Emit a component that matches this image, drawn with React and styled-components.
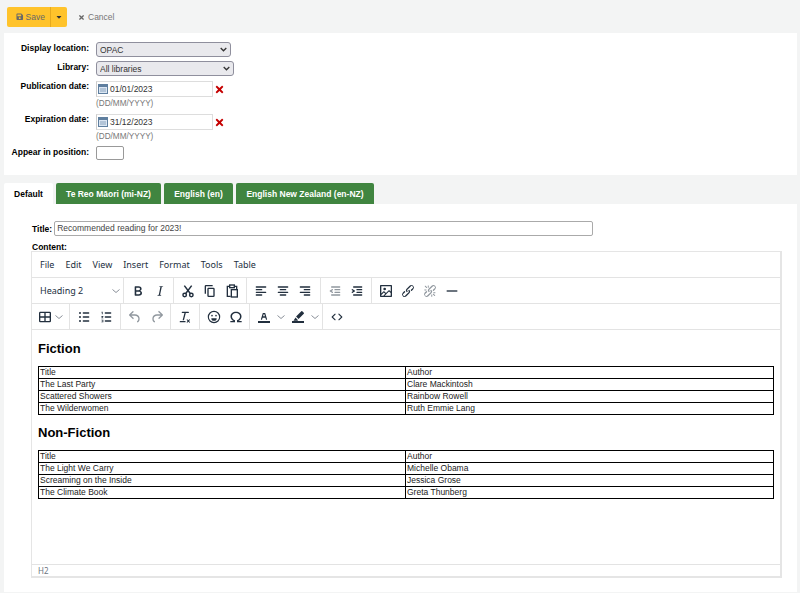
import styled, { createGlobalStyle } from "styled-components";
import { FaSave, FaTimes, FaCaretDown } from "react-icons/fa";

const GlobalStyle = createGlobalStyle`
    html, body {
        margin: 0;
        padding: 0;
        background: #f3f4f4;
        font-family: "Liberation Sans", Arial, sans-serif;
        font-size: 8.5px;
        color: #000;
    }
`;

const Page = styled.div`
    width: 800px;
    height: 593px;
    overflow: hidden;
`;

const Toolbar = styled.div`
    display: flex;
    align-items: center;
    height: 33px;
    padding: 0 0 0 7px;
    box-sizing: border-box;
`;

const SaveGroup = styled.div`
    display: flex;
    height: 20px;
    margin-top: 1px;
    width: 60px;
    background: #ffc32b;
    border-radius: 2px;
    color: #696969;
`;

const SaveButton = styled.div`
    display: flex;
    align-items: center;
    gap: 2px;
    width: 44px;
    padding-left: 9px;
    box-sizing: border-box;
    border-right: 1px solid #e6a91e;
    svg { font-size: 7.5px; }
`;

const SaveCaret = styled.div`
    flex: 1;
    display: flex;
    align-items: center;
    justify-content: center;
    color: #333;
    svg { font-size: 8px; }
`;

const CancelLink = styled.div`
    display: flex;
    align-items: center;
    gap: 3px;
    margin-left: 11px;
    margin-top: 1px;
    color: #777;
    svg { font-size: 7px; color: #666; }
`;

const Panel = styled.div`
    margin: 0 3px 0 4px;
    background: #fff;
`;

const FormPanel = styled(Panel)`
    height: 142px;
    padding-top: 9px;
    box-sizing: border-box;
`;

const FormRow = styled.div`
    display: flex;
    align-items: flex-start;
    margin-bottom: 4px;
`;

const Label = styled.div`
    width: 85px;
    margin-right: 7px;
    text-align: right;
    font-weight: 700;
    line-height: 12px;
    color: #000;
    white-space: nowrap;
`;

const SelectWrap = styled.div`
    position: relative;
    width: ${({ $width }) => $width}px;
    height: 15px;
`;

const SelectArrow = styled.svg`
    position: absolute;
    right: 4px;
    top: 5px;
    pointer-events: none;
`;

const Select = styled.select`
    appearance: none;
    display: block;
    width: 100%;
    height: 100%;
    padding: 0 0 0 3px;
    box-sizing: border-box;
    border: 1px solid #8f8f9d;
    border-radius: 3px;
    background: #e9e9ed;
    font-family: "Liberation Sans", Arial, sans-serif;
    font-size: 8.5px;
    color: #333;
`;

const DateField = styled.div`
    display: grid;
    grid-template-columns: 117px auto;
    column-gap: 1px;
    align-items: center;
`;

const DateInput = styled.div`
    display: flex;
    align-items: center;
    gap: 2px;
    height: 16px;
    margin-top: 1px;
    padding-left: 1px;
    box-sizing: border-box;
    border: 1px solid #ddd;
    border-left-color: #ccc;
    color: #333;
`;

const ClearIcon = styled(FaTimes)`
    font-size: 11px;
    margin-top: 2px;
    color: #c50000;
`;

const Hint = styled.div`
    grid-column: 1 / 3;
    height: 12px;
    line-height: 14px;
    color: #777;
    font-size: 8.2px;
`;

const PositionInput = styled.div`
    width: 28px;
    height: 14px;
    box-sizing: border-box;
    border: 1px solid #999;
    border-radius: 2px;
    background: #fff;
`;

const Tabs = styled.div`
    display: flex;
    gap: 3px;
    height: 21px;
    margin: 8px 0 0 4px;
`;

const Tab = styled.div`
    display: flex;
    align-items: center;
    justify-content: center;
    width: ${({ $width }) => $width}px;
    font-weight: 700;
    background: ${({ $active }) => ($active ? "#fff" : "#408540")};
    color: ${({ $active }) => ($active ? "#000" : "#fff")};
    border-radius: 2px 2px 0 0;
`;

const ContentPanel = styled(Panel)`
    height: 388px;
    padding: 17px 15px 0 27px;
    box-sizing: border-box;
`;

const TitleRow = styled.div`
    display: flex;
    align-items: center;
    gap: 2px;
    height: 15px;
    margin-left: 1px;
    font-weight: 700;
`;

const TitleInput = styled.div`
    width: 539px;
    height: 15px;
    line-height: 13px;
    padding-left: 2px;
    box-sizing: border-box;
    border: 1px solid #aaa;
    border-radius: 2px;
    font-weight: 400;
    color: #444;
`;

const ContentLabel = styled.div`
    margin: 6px 0 0 1px;
    height: 9px;
    line-height: 10px;
    font-weight: 700;
`;

const Editor = styled.div`
    display: flex;
    flex-direction: column;
    height: 327px;
    box-sizing: border-box;
    border: 1px solid #e5e5e5;
    border-bottom-width: 2px;
    border-right-width: 2px;
`;

const MenuBar = styled.div`
    display: flex;
    align-items: center;
    gap: 11px;
    height: 26px;
    padding-left: 8px;
    box-sizing: border-box;
    border-bottom: 1px solid #e3e3e3;
    font-family: "Noto Sans", sans-serif;
    font-size: 9px;
    color: #222f3e;
`;

const ToolRow = styled.div`
    display: flex;
    height: 26px;
    box-sizing: border-box;
    border-bottom: 1px solid #e3e3e3;
`;

const ToolGroup = styled.div`
    display: flex;
    align-items: center;
    padding: ${({ $pad }) => $pad || "0 3px"};
    border-left: ${({ $first }) => ($first ? "0" : "1px solid #e3e3e3")};
`;

const FormatSelect = styled.div`
    display: flex;
    align-items: center;
    justify-content: space-between;
    width: 91px;
    padding: 0 2px 0 8px;
    box-sizing: border-box;
    font-family: "Noto Sans", sans-serif;
    font-size: 9px;
    color: #222f3e;
`;

const ToolButton = styled.div`
    display: flex;
    align-items: center;
    justify-content: center;
    width: ${({ $width }) => $width || 22}px;
    height: 22px;
`;

const SplitPart = styled.div`
    display: flex;
    align-items: center;
    justify-content: center;
    width: ${({ $width }) => $width}px;
`;

const EditArea = styled.div`
    flex: 1;
    padding: 1px 6px 0;
    color: #222;
`;

const Heading = styled.h2`
    margin: 0;
    height: 35px;
    padding-top: 9px;
    box-sizing: border-box;
    font-size: 13px;
    line-height: 17px;
    font-weight: 700;
    color: #000;
`;

const DocTable = styled.table`
    width: 736px;
    border-collapse: collapse;
    table-layout: fixed;
    td {
        height: 11px;
        padding: 0 1px;
        border: 1px solid #000;
        font-size: 8.5px;
        line-height: 11px;
        color: #222;
        white-space: nowrap;
    }
    td:first-child { width: 364px; }
`;

const StatusBar = styled.div`
    height: 12px;
    line-height: 11px;
    padding-left: 6px;
    box-sizing: border-box;
    border-top: 1px solid #e3e3e3;
    font-family: "Noto Sans", sans-serif;
    font-size: 8px;
    color: #6d7580;
`;

// tinymce style icons, 24x24 viewbox
const ICONS = {
    bold: <path d="M7.8 19c-.3 0-.5 0-.6-.2l-.2-.5V5.7c0-.2 0-.4.2-.5l.6-.2h5c1.5 0 2.7.3 3.5 1 .7.6 1.1 1.4 1.1 2.5a3 3 0 0 1-.6 1.9c-.4.6-1 1-1.6 1.2.4.1.9.3 1.3.6s.8.7 1 1.2c.4.4.5 1 .5 1.6 0 1.3-.4 2.3-1.3 3-.8.7-2.1 1-3.8 1H7.8zm5-8.3c.6 0 1.2-.1 1.6-.5.4-.3.6-.7.6-1.3 0-1.1-.8-1.7-2.4-1.7H9.3v3.5h3.4zm.5 6c.7 0 1.3-.1 1.7-.4.4-.4.6-.9.6-1.5s-.2-1-.7-1.4c-.4-.3-1-.4-2-.4H9.4v3.8h4z" />,
    italic: <path d="M16.7 4.7l-.1.9h-.3c-.6 0-1 0-1.4.3-.3.3-.4.6-.5 1.1l-2.1 9.8v.6c0 .5.4.8 1.4.8h.2l-.2.8H8l.2-.8h.2c1.1 0 1.8-.5 2-1.5l2-9.8.1-.5c0-.6-.4-.8-1.4-.8h-.3l.2-.9h5.8z" />,
    cut: (
        <g fill="none" stroke="currentColor" strokeWidth="2.2">
            <circle cx="7" cy="18" r="2.6" />
            <circle cx="17" cy="18" r="2.6" />
            <path d="M8.6 15.8L17.5 4M15.4 15.8L6.5 4" />
        </g>
    ),
    copy: <path d="M16 3H6a2 2 0 0 0-2 2v11h2V5h10V3zm1 4a2 2 0 0 1 2 2v10a2 2 0 0 1-2 2h-7a2 2 0 0 1-2-2V9c0-1.2.9-2 2-2h7zm0 12V9h-7v10h7z" />,
    paste: (
        <g fill="none" stroke="currentColor" strokeWidth="2">
            <path d="M8 5H5v15h5" />
            <path d="M16 5h3v4" />
            <rect x="8.5" y="3" width="7" height="4" />
            <rect x="11" y="10" width="9" height="11" />
        </g>
    ),
    alignLeft: <path d="M5 5h14c.6 0 1 .4 1 1s-.4 1-1 1H5a1 1 0 1 1 0-2zm0 4h8c.6 0 1 .4 1 1s-.4 1-1 1H5a1 1 0 1 1 0-2zm0 8h8c.6 0 1 .4 1 1s-.4 1-1 1H5a1 1 0 0 1 0-2zm0-4h14c.6 0 1 .4 1 1s-.4 1-1 1H5a1 1 0 0 1 0-2z" />,
    alignCenter: <path d="M5 5h14c.6 0 1 .4 1 1s-.4 1-1 1H5a1 1 0 1 1 0-2zm3 4h8c.6 0 1 .4 1 1s-.4 1-1 1H8a1 1 0 1 1 0-2zm0 8h8c.6 0 1 .4 1 1s-.4 1-1 1H8a1 1 0 0 1 0-2zm-3-4h14c.6 0 1 .4 1 1s-.4 1-1 1H5a1 1 0 0 1 0-2z" />,
    alignRight: <path d="M5 5h14c.6 0 1 .4 1 1s-.4 1-1 1H5a1 1 0 1 1 0-2zm6 4h8c.6 0 1 .4 1 1s-.4 1-1 1h-8a1 1 0 0 1 0-2zm0 8h8c.6 0 1 .4 1 1s-.4 1-1 1h-8a1 1 0 0 1 0-2zm-6-4h14c.6 0 1 .4 1 1s-.4 1-1 1H5a1 1 0 0 1 0-2z" />,
    outdent: <path d="M7 5h12c.6 0 1 .4 1 1s-.4 1-1 1H7a1 1 0 1 1 0-2zm5 4h7c.6 0 1 .4 1 1s-.4 1-1 1h-7a1 1 0 0 1 0-2zm0 4h7c.6 0 1 .4 1 1s-.4 1-1 1h-7a1 1 0 0 1 0-2zm-5 4h12a1 1 0 0 1 0 2H7a1 1 0 0 1 0-2zm1.6-3.8a1 1 0 0 1-1.2 1.6l-3-2a1 1 0 0 1 0-1.6l3-2a1 1 0 0 1 1.2 1.6L6.8 12l1.8 1.2z" />,
    indent: <path d="M7 5h12c.6 0 1 .4 1 1s-.4 1-1 1H7a1 1 0 1 1 0-2zm5 4h7c.6 0 1 .4 1 1s-.4 1-1 1h-7a1 1 0 0 1 0-2zm0 4h7c.6 0 1 .4 1 1s-.4 1-1 1h-7a1 1 0 0 1 0-2zm-5 4h12a1 1 0 0 1 0 2H7a1 1 0 0 1 0-2zm-2.6-3.8L6.2 12l-1.8-1.2a1 1 0 0 1 1.2-1.6l3 2a1 1 0 0 1 0 1.6l-3 2a1 1 0 1 1-1.2-1.6z" />,
    image: <path d="M5 15.7l3.3-3.2c.3-.3.7-.3 1 0L12 15l4.1-4c.3-.4.8-.4 1 0l2 1.9V5H5v10.7zM5 18V19h3l2.8-2.9-2-2L5 17.9zm14-3l-2.5-2.4-6.4 6.5H19v-4zM4 3h16c.6 0 1 .4 1 1v16c0 .6-.4 1-1 1H4a1 1 0 0 1-1-1V4c0-.6.4-1 1-1zm6 8a2 2 0 1 0 0-4 2 2 0 0 0 0 4z" />,
    link: <path d="M6.2 12.3a1 1 0 0 1 1.4 1.4l-2 2a2 2 0 1 0 2.6 2.8l4.8-4.8a1 1 0 0 0 0-1.4 1 1 0 1 1 1.4-1.3 2.9 2.9 0 0 1 0 4L9.6 20a3.9 3.9 0 0 1-5.5-5.5l2-2zm11.6-.6a1 1 0 0 1-1.4-1.4l2-2a2 2 0 1 0-2.6-2.8L11 10.3a1 1 0 0 0 0 1.4A1 1 0 1 1 9.6 13a2.9 2.9 0 0 1 0-4L14.4 4a3.9 3.9 0 0 1 5.5 5.5l-2 2z" />,
    unlink: <path d="M6.2 12.3a1 1 0 0 1 1.4 1.4l-2.1 2a2 2 0 1 0 2.7 2.8l4.8-4.8a1 1 0 0 0 0-1.4 1 1 0 1 1 1.4-1.3 2.9 2.9 0 0 1 0 4l-4.8 4.7a3.9 3.9 0 0 1-5.5-5.5l2-2zm11.6-.6a1 1 0 0 1-1.4-1.4l2.1-2a2 2 0 1 0-2.7-2.8L11 10.3a1 1 0 0 0 0 1.4A1 1 0 1 1 9.6 13a2.9 2.9 0 0 1 0-4L14.4 4a3.9 3.9 0 0 1 5.5 5.5l-2 2zM7.6 6.3a.8.8 0 0 1-1 1.1L4.3 5.1a.8.8 0 0 1 1-1.1l2.3 2.3zm12.1 12.2a.8.8 0 0 1-1 1.1l-2.3-2.3a.8.8 0 0 1 1-1.1l2.3 2.3zM9.6 3.8c.3 0 .5.2.5.5l.1 2.4a.8.8 0 0 1-1.5 0V4.3c0-.3.3-.5.5-.5h.4zm5.3 13.4c.3 0 .5.3.5.5v2.4a.8.8 0 0 1-1.5 0v-2.4c0-.2.3-.5.5-.5h.5zM3.5 10.1c0-.2.2-.4.5-.4h2.3a.8.8 0 0 1 0 1.5H4c-.3 0-.5-.3-.5-.6zm13.4 4.4c0-.3.2-.5.5-.5h2.3a.8.8 0 0 1 0 1.5h-2.3c-.3 0-.5-.3-.5-.6z" />,
    hr: <path d="M4 11h16v2H4z" />,
    table: <path d="M19 4a2 2 0 0 1 2 2v12a2 2 0 0 1-2 2H5a2 2 0 0 1-2-2V6c0-1.1.9-2 2-2h14zm0 9h-6v5h6v-5zm-8 0H5v5h6v-5zm8-7h-6v5h6V6zm-8 0H5v5h6V6z" />,
    bullist: (
        <g>
            <path d="M11 5h8a1 1 0 0 1 0 2h-8a1 1 0 0 1 0-2zm0 6h8a1 1 0 0 1 0 2h-8a1 1 0 0 1 0-2zm0 6h8a1 1 0 0 1 0 2h-8a1 1 0 0 1 0-2z" />
            <circle cx="6" cy="6" r="1.5" />
            <circle cx="6" cy="12" r="1.5" />
            <circle cx="6" cy="18" r="1.5" />
        </g>
    ),
    numlist: (
        <g>
            <path d="M11 5h8a1 1 0 0 1 0 2h-8a1 1 0 0 1 0-2zm0 6h8a1 1 0 0 1 0 2h-8a1 1 0 0 1 0-2zm0 6h8a1 1 0 0 1 0 2h-8a1 1 0 0 1 0-2z" />
            <path d="M5.5 4H7v4H5.8V5.2H5zM5 10.5h3v1L6.4 13H8v1H5v-1l1.6-1.5H5zM5 16h3v4H5v-1h2v-.6H5.8v-.8H7V17H5z" />
        </g>
    ),
    undo: <path d="M6.4 8H12c3.7 0 6.2 2 6.8 5.1.6 2.7-.4 5.6-2.3 6.8a1 1 0 0 1-1-1.8c1.1-.6 1.8-2.7 1.4-4.6-.5-2.1-2.1-3.5-4.9-3.5H6.4l3.3 3.3a1 1 0 1 1-1.4 1.4l-5-5a1 1 0 0 1 0-1.4l5-5a1 1 0 0 1 1.4 1.4L6.4 8z" />,
    redo: <path d="M17.6 10H12c-2.8 0-4.4 1.4-4.9 3.5-.4 2 .3 4 1.4 4.6a1 1 0 1 1-1 1.8c-2-1.2-2.9-4.1-2.3-6.8.6-3 3-5.1 6.8-5.1h5.6l-3.3-3.3a1 1 0 1 1 1.4-1.4l5 5a1 1 0 0 1 0 1.4l-5 5a1 1 0 0 1-1.4-1.4l3.3-3.3z" />,
    clear: <path d="M13.2 6l-2.6 10.2a1 1 0 0 1-1 .8h-.2a.8.8 0 0 1-.8-1l2.6-10H8a1 1 0 1 1 0-2h9a1 1 0 0 1 0 2h-3.8zM5 18h7a1 1 0 0 1 0 2H5a1 1 0 0 1 0-2zm10.3-2.7l1.7 1.7 1.7-1.7 1 1-1.7 1.7 1.7 1.7-1 1-1.7-1.7-1.7 1.7-1-1 1.7-1.7-1.7-1.7z" />,
    emoji: (
        <g>
            <circle cx="12" cy="12" r="8.5" fill="none" stroke="currentColor" strokeWidth="1.7" />
            <circle cx="9" cy="10" r="1.2" />
            <circle cx="15" cy="10" r="1.2" />
            <path d="M8 13.8h8a4 4 0 0 1-8 0z" />
        </g>
    ),
    omega: <path d="M3.5 20v-2h4.9A7.5 7.5 0 0 1 3.7 11C3.7 7 7.4 4 12 4s8.3 3 8.3 7a7.5 7.5 0 0 1-4.7 7h4.9v2h-7v-3.3c2.6-.8 4.5-3 4.5-5.6 0-3-2.6-5.1-6-5.1s-6 2.1-6 5.1c0 2.6 1.9 4.8 4.5 5.6V20z" />,
    textColor: (
        <g>
            <path d="M3 18h18v3H3z" />
            <path d="M8.7 16h-.8a.5.5 0 0 1-.5-.6l2.7-9c.1-.3.3-.4.5-.4h2.8c.2 0 .4.1.5.4l2.7 9a.5.5 0 0 1-.5.6h-.8a.5.5 0 0 1-.4-.4l-.7-2.2c0-.3-.3-.4-.5-.4h-3.4c-.2 0-.4.1-.5.4l-.7 2.2c0 .3-.2.4-.4.4zm2.6-7.6l-.6 2a.5.5 0 0 0 .5.6h1.6a.5.5 0 0 0 .5-.6l-.6-2c0-.3-.3-.4-.5-.4h-.4c-.2 0-.4.1-.5.4z" />
        </g>
    ),
    highlight: (
        <g>
            <path d="M3 18h18v3H3z" />
            <path d="M17 3.3a1 1 0 0 1 1.4 0l2.3 2.3a1 1 0 0 1 0 1.4l-7.9 8-3.7-3.7zM8.3 12.9l3.8 3.8-1.1 1H5.2z" />
        </g>
    ),
    code: <path d="M9.8 15.7c.3.3.3.8 0 1-.3.4-.9.4-1.2 0l-4.4-4.1a.8.8 0 0 1 0-1.2l4.4-4.2c.3-.3.9-.3 1.2 0 .3.3.3.8 0 1.1L6 12l3.8 3.7zM14.2 15.7c-.3.3-.3.8 0 1 .4.4.9.4 1.2 0l4.4-4.1c.3-.3.3-.9 0-1.2l-4.4-4.2a.8.8 0 0 0-1.2 0c-.3.3-.3.8 0 1.1L18 12l-3.8 3.7z" />,
};

const Icon = ({ name, off }) => (
    <svg
        width="16"
        height="16"
        viewBox="0 0 24 24"
        fill="currentColor"
        color={off ? "rgba(34,47,62,.5)" : "#222f3e"}
    >
        {ICONS[name]}
    </svg>
);

const Chevron = () => (
    <svg width="10" height="10" viewBox="0 0 10 10" fill="none" stroke="#8a9099" strokeWidth="1">
        <path d="M1.5 3.5L5 6.5l3.5-3" />
    </svg>
);

const CalendarIcon = () => (
    <svg width="10" height="10" viewBox="0 0 10 10">
        <rect x="0.5" y="0.5" width="9" height="9" fill="#dbe6f3" stroke="#5f7f9f" />
        <rect x="1" y="1" width="8" height="2" fill="#5f7f9f" />
        <path d="M2 5h6M2 7h6" stroke="#8aa3bc" />
    </svg>
);

const Tool = ({ name, off }) => (
    <ToolButton>
        <Icon name={name} off={off} />
    </ToolButton>
);

const Split = ({ name, iconWidth, arrowWidth }) => (
    <ToolButton $width={iconWidth + arrowWidth}>
        <SplitPart $width={iconWidth}>
            <Icon name={name} />
        </SplitPart>
        <SplitPart $width={arrowWidth}>
            <Chevron />
        </SplitPart>
    </ToolButton>
);

const FormSelect = ({ width, value }) => (
    <SelectWrap $width={width}>
        <Select defaultValue={value}>
            <option>{value}</option>
        </Select>
        <SelectArrow width="7" height="5" viewBox="0 0 7 5" fill="none" stroke="#333" strokeWidth="1.3">
            <path d="M.7 1L3.5 3.8 6.3 1" />
        </SelectArrow>
    </SelectWrap>
);

const DateRow = ({ label, value }) => (
    <FormRow>
        <Label>{label}</Label>
        <DateField>
            <DateInput>
                <CalendarIcon />
                {value}
            </DateInput>
            <ClearIcon />
            <Hint>(DD/MM/YYYY)</Hint>
        </DateField>
    </FormRow>
);

const Doc = ({ rows }) => (
    <DocTable>
        <tbody>
            {rows.map((row) => (
                <tr key={row[0]}>
                    <td>{row[0]}</td>
                    <td>{row[1]}</td>
                </tr>
            ))}
        </tbody>
    </DocTable>
);

const fiction = [
    ["Title", "Author"],
    ["The Last Party", "Clare Mackintosh"],
    ["Scattered Showers", "Rainbow Rowell"],
    ["The Wilderwomen", "Ruth Emmie Lang"],
];

const nonFiction = [
    ["Title", "Author"],
    ["The Light We Carry", "Michelle Obama"],
    ["Screaming on the Inside", "Jessica Grose"],
    ["The Climate Book", "Greta Thunberg"],
];

const App = () => {
    return (
        <Page>
            <GlobalStyle />
            <Toolbar>
                <SaveGroup>
                    <SaveButton>
                        <FaSave />
                        Save
                    </SaveButton>
                    <SaveCaret>
                        <FaCaretDown />
                    </SaveCaret>
                </SaveGroup>
                <CancelLink>
                    <FaTimes />
                    Cancel
                </CancelLink>
            </Toolbar>

            <FormPanel>
                <FormRow>
                    <Label>Display location:</Label>
                    <FormSelect width={135} value="OPAC" />
                </FormRow>
                <FormRow>
                    <Label>Library:</Label>
                    <FormSelect width={138} value="All libraries" />
                </FormRow>
                <DateRow label="Publication date:" value="01/01/2023" />
                <DateRow label="Expiration date:" value="31/12/2023" />
                <FormRow>
                    <Label>Appear in position:</Label>
                    <PositionInput />
                </FormRow>
            </FormPanel>

            <Tabs>
                <Tab $active $width={49}>Default</Tab>
                <Tab $width={105}>Te Reo Māori (mi-NZ)</Tab>
                <Tab $width={69}>English (en)</Tab>
                <Tab $width={138}>English New Zealand (en-NZ)</Tab>
            </Tabs>

            <ContentPanel>
                <TitleRow>
                    Title:
                    <TitleInput>Recommended reading for 2023!</TitleInput>
                </TitleRow>
                <ContentLabel>Content:</ContentLabel>
                <Editor>
                    <MenuBar>
                        <span>File</span>
                        <span>Edit</span>
                        <span>View</span>
                        <span>Insert</span>
                        <span>Format</span>
                        <span>Tools</span>
                        <span>Table</span>
                    </MenuBar>
                    <ToolRow>
                        <FormatSelect>
                            Heading 2
                            <Chevron />
                        </FormatSelect>
                        <ToolGroup $pad="0 2px 0 3px">
                            <Tool name="bold" />
                            <Tool name="italic" />
                        </ToolGroup>
                        <ToolGroup>
                            <Tool name="cut" />
                            <Tool name="copy" />
                            <Tool name="paste" />
                        </ToolGroup>
                        <ToolGroup $pad="0 3.5px 0 3px">
                            <Tool name="alignLeft" />
                            <Tool name="alignCenter" />
                            <Tool name="alignRight" />
                        </ToolGroup>
                        <ToolGroup>
                            <Tool name="outdent" off />
                            <Tool name="indent" />
                        </ToolGroup>
                        <ToolGroup>
                            <Tool name="image" />
                            <Tool name="link" />
                            <Tool name="unlink" off />
                            <Tool name="hr" />
                        </ToolGroup>
                    </ToolRow>
                    <ToolRow>
                        <ToolGroup $first $pad="0 5px 0 4px">
                            <Split name="table" iconWidth={18} arrowWidth={10} />
                        </ToolGroup>
                        <ToolGroup>
                            <Tool name="bullist" />
                            <Tool name="numlist" />
                        </ToolGroup>
                        <ToolGroup $pad="0 2px 0 3px">
                            <Tool name="undo" off />
                            <Tool name="redo" off />
                        </ToolGroup>
                        <ToolGroup>
                            <Tool name="clear" />
                        </ToolGroup>
                        <ToolGroup $pad="0 2px 0 3px">
                            <Tool name="emoji" />
                            <Tool name="omega" />
                        </ToolGroup>
                        <ToolGroup $pad="0 0 0 3.5px">
                            <Split name="textColor" iconWidth={20} arrowWidth={14} />
                            <Split name="highlight" iconWidth={20} arrowWidth={14} />
                        </ToolGroup>
                        <ToolGroup>
                            <Tool name="code" />
                        </ToolGroup>
                    </ToolRow>
                    <EditArea>
                        <Heading>Fiction</Heading>
                        <Doc rows={fiction} />
                        <Heading>Non-Fiction</Heading>
                        <Doc rows={nonFiction} />
                    </EditArea>
                    <StatusBar>H2</StatusBar>
                </Editor>
            </ContentPanel>
        </Page>
    );
};

export default App;
